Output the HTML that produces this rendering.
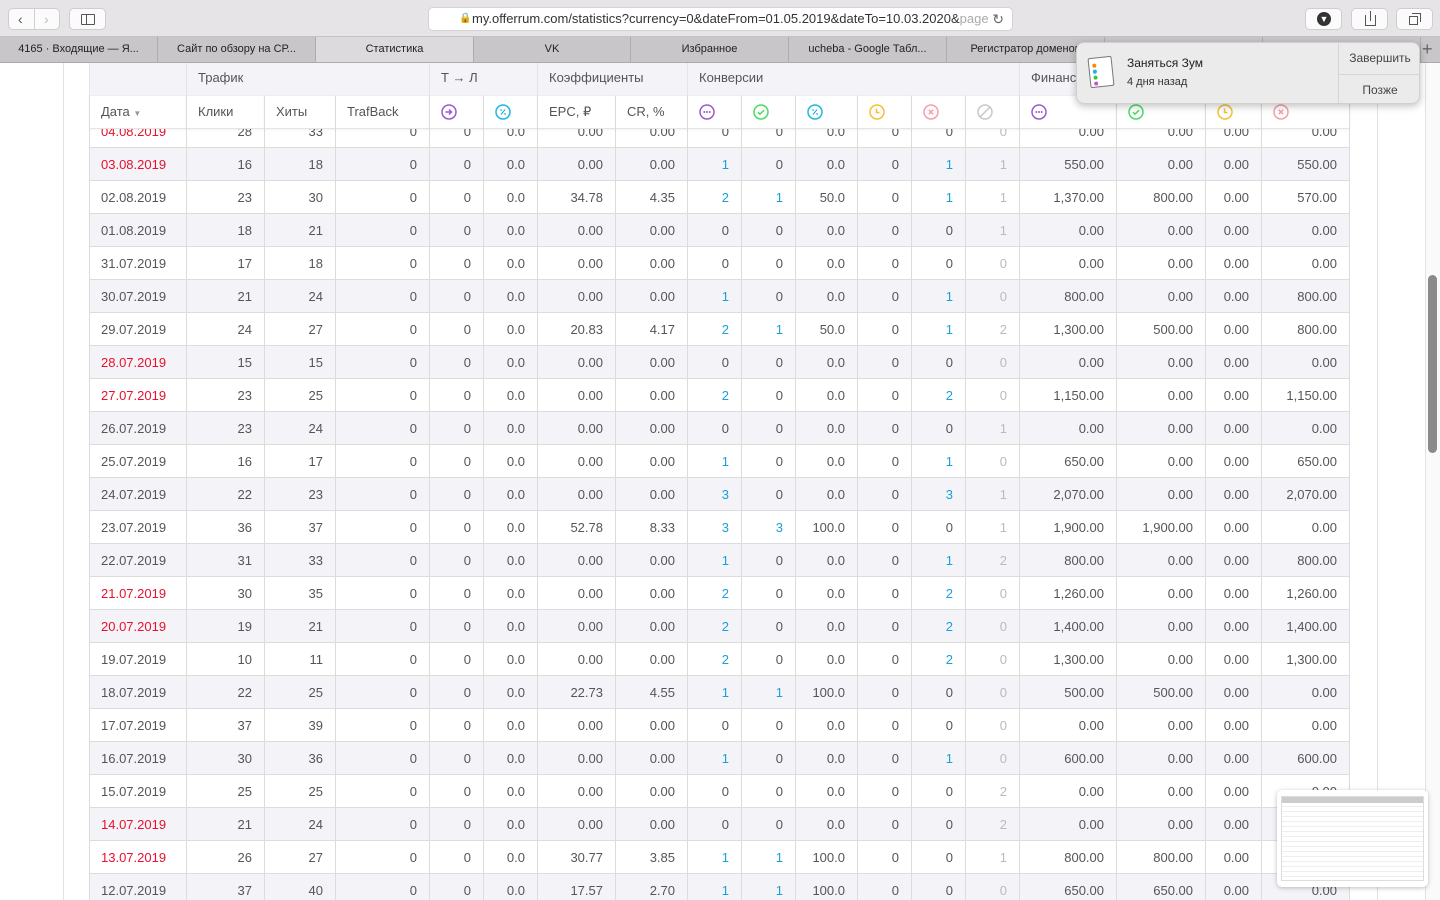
<!DOCTYPE html>
<html><head><meta charset="utf-8"><style>
*{box-sizing:border-box;margin:0;padding:0}
body{width:1440px;height:900px;overflow:hidden;background:#fff;font-family:"Liberation Sans","Noto Sans CJK SC",sans-serif;position:relative;color:#555}
.tb{position:absolute;left:0;top:0;width:1440px;height:37px;background:#e6e4e6;border-bottom:1px solid #c4c2c4}
.btn{position:absolute;top:8px;height:22px;background:#fbfbfb;border:1px solid #cfcdcf;border-radius:5px}
.url{position:absolute;left:428px;top:7px;width:585px;height:24px;background:#fff;border:1px solid #d4d2d4;border-radius:5px;font-size:13px;color:#333;line-height:22px;padding-left:30px;white-space:nowrap;overflow:hidden}
.tabs{position:absolute;left:0;top:37px;width:1440px;height:26px;background:#c8c6c8;border-bottom:1px solid #aaa}
.tab{position:absolute;top:0;height:25px;border-right:1px solid #aeacae;font-size:11px;color:#222;text-align:center;line-height:25px;white-space:nowrap;overflow:hidden}
.tab.a{background:#dcdadc}
.page{position:absolute;left:0;top:63px;width:1440px;height:837px;overflow:hidden}
.vl{position:absolute;top:0;bottom:0;width:1px;background:#e2e2e2}
table{border-collapse:collapse;position:absolute;left:89px;table-layout:fixed}
td{border:1px solid #dcdcdc;height:33px;font-size:13px;text-align:right;padding-right:12px;white-space:nowrap;color:#555}
td:first-child{text-align:left;padding-left:11px}
tr:nth-child(even) td{background:#f4f4f8}
.r{color:#e8102e!important}.b{color:#1a9fd8!important}.g{color:#bbb!important}
.hd{position:absolute;left:89px;top:0;width:1261px;height:65px}
.grp{position:absolute;top:0;height:32px;background:#f4f4f8;font-size:13px;line-height:30px;padding-left:11px;color:#555;border-left:1px solid #e4e4e8}
.ch{position:absolute;top:32px;height:34px;background:#fff;font-size:13px;line-height:32px;padding-left:11px;border-left:1px solid #dcdcdc;border-top:1px solid #eee;border-bottom:1px solid #e4e4e4;box-shadow:0 1px 2px rgba(0,0,0,.05)}
.ch svg{margin-top:8px}
.notif{position:absolute;left:1076px;top:42px;width:344px;height:62px;background:#ecebec;border-radius:8px;box-shadow:0 2px 8px rgba(0,0,0,.25);border:1px solid #d0d0d0}
</style></head><body>
<div class="tb">
<div class="btn" style="left:8px;width:52px"><span style="position:absolute;left:9px;top:2px;font-size:14px;color:#555">&#8249;</span><span style="position:absolute;left:25px;top:0;bottom:0;width:1px;background:#d0d0d0"></span><span style="position:absolute;left:35px;top:2px;font-size:14px;color:#bbb">&#8250;</span></div>
<div class="btn" style="left:69px;width:37px"><span style="position:absolute;left:11px;top:5px;width:14px;height:11px;border:1px solid #555;border-radius:1px"></span><span style="position:absolute;left:16px;top:5px;width:1px;height:11px;background:#555"></span></div>
<div class="url"><span style="position:absolute;left:30px;top:0;font-size:10px;color:#777">&#128274;</span><span style="margin-left:13px">my.offerrum.com/statistics?currency=0&amp;dateFrom=01.05.2019&amp;dateTo=10.03.2020&amp;<span style="color:#aaa">page</span></span><span style="position:absolute;right:8px;top:0;color:#666;font-size:14px;background:#fff;padding-left:4px">&#8635;</span></div>
<div class="btn" style="left:1305px;width:37px"><span style="position:absolute;left:11px;top:3px;width:14px;height:14px;border-radius:50%;background:#333;color:#fff;font-size:9px;text-align:center;line-height:14px">&#9660;</span></div>
<div class="btn" style="left:1351px;width:37px"><span style="position:absolute;left:13px;top:6px;width:11px;height:11px;border:1px solid #555;border-top:none"></span><span style="position:absolute;left:18px;top:2px;width:1px;height:10px;background:#555"></span></div>
<div class="btn" style="left:1396px;width:37px"><span style="position:absolute;left:12px;top:7px;width:9px;height:9px;border:1px solid #555"></span><span style="position:absolute;left:15px;top:4px;width:9px;height:9px;border-top:1px solid #555;border-right:1px solid #555"></span></div>
</div>
<div class="tabs">
<div class="tab" style="left:0;width:158px">4165 · Входящие — Я...</div>
<div class="tab" style="left:158px;width:158px">Сайт по обзору на СР...</div>
<div class="tab a" style="left:316px;width:158px">Статистика</div>
<div class="tab" style="left:474px;width:157px">VK</div>
<div class="tab" style="left:631px;width:158px">Избранное</div>
<div class="tab" style="left:789px;width:158px">ucheba - Google Табл...</div>
<div class="tab" style="left:947px;width:158px">Регистратор доменов</div>
<div class="tab" style="left:1105px;width:158px"></div>
<div class="tab" style="left:1263px;width:158px"></div>
<div style="position:absolute;left:1422px;top:0;font-size:18px;color:#666;line-height:25px">+</div>
</div>
<div class="page">
<div class="vl" style="left:63px"></div><div class="vl" style="left:1377px"></div><div class="vl" style="left:1425px"></div>
<div style="position:absolute;left:1426px;top:0;width:14px;height:837px;background:#fafafa"></div>
<div style="position:absolute;left:1428px;top:212px;width:9px;height:178px;border-radius:5px;background:#8a8a8a"></div>
<table style="top:51px">
<colgroup><col style="width:97px"><col style="width:78px"><col style="width:71px"><col style="width:94px"><col style="width:54px"><col style="width:54px"><col style="width:78px"><col style="width:72px"><col style="width:54px"><col style="width:54px"><col style="width:62px"><col style="width:54px"><col style="width:54px"><col style="width:54px"><col style="width:97px"><col style="width:89px"><col style="width:56px"><col style="width:88px"></colgroup>
<tr><td class="r">04.08.2019</td><td>28</td><td>33</td><td>0</td><td>0</td><td>0.0</td><td>0.00</td><td>0.00</td><td>0</td><td>0</td><td>0.0</td><td>0</td><td>0</td><td class="g">0</td><td>0.00</td><td>0.00</td><td>0.00</td><td>0.00</td></tr>
<tr><td class="r">03.08.2019</td><td>16</td><td>18</td><td>0</td><td>0</td><td>0.0</td><td>0.00</td><td>0.00</td><td class="b">1</td><td>0</td><td>0.0</td><td>0</td><td class="b">1</td><td class="g">1</td><td>550.00</td><td>0.00</td><td>0.00</td><td>550.00</td></tr>
<tr><td>02.08.2019</td><td>23</td><td>30</td><td>0</td><td>0</td><td>0.0</td><td>34.78</td><td>4.35</td><td class="b">2</td><td class="b">1</td><td>50.0</td><td>0</td><td class="b">1</td><td class="g">1</td><td>1,370.00</td><td>800.00</td><td>0.00</td><td>570.00</td></tr>
<tr><td>01.08.2019</td><td>18</td><td>21</td><td>0</td><td>0</td><td>0.0</td><td>0.00</td><td>0.00</td><td>0</td><td>0</td><td>0.0</td><td>0</td><td>0</td><td class="g">1</td><td>0.00</td><td>0.00</td><td>0.00</td><td>0.00</td></tr>
<tr><td>31.07.2019</td><td>17</td><td>18</td><td>0</td><td>0</td><td>0.0</td><td>0.00</td><td>0.00</td><td>0</td><td>0</td><td>0.0</td><td>0</td><td>0</td><td class="g">0</td><td>0.00</td><td>0.00</td><td>0.00</td><td>0.00</td></tr>
<tr><td>30.07.2019</td><td>21</td><td>24</td><td>0</td><td>0</td><td>0.0</td><td>0.00</td><td>0.00</td><td class="b">1</td><td>0</td><td>0.0</td><td>0</td><td class="b">1</td><td class="g">0</td><td>800.00</td><td>0.00</td><td>0.00</td><td>800.00</td></tr>
<tr><td>29.07.2019</td><td>24</td><td>27</td><td>0</td><td>0</td><td>0.0</td><td>20.83</td><td>4.17</td><td class="b">2</td><td class="b">1</td><td>50.0</td><td>0</td><td class="b">1</td><td class="g">2</td><td>1,300.00</td><td>500.00</td><td>0.00</td><td>800.00</td></tr>
<tr><td class="r">28.07.2019</td><td>15</td><td>15</td><td>0</td><td>0</td><td>0.0</td><td>0.00</td><td>0.00</td><td>0</td><td>0</td><td>0.0</td><td>0</td><td>0</td><td class="g">0</td><td>0.00</td><td>0.00</td><td>0.00</td><td>0.00</td></tr>
<tr><td class="r">27.07.2019</td><td>23</td><td>25</td><td>0</td><td>0</td><td>0.0</td><td>0.00</td><td>0.00</td><td class="b">2</td><td>0</td><td>0.0</td><td>0</td><td class="b">2</td><td class="g">0</td><td>1,150.00</td><td>0.00</td><td>0.00</td><td>1,150.00</td></tr>
<tr><td>26.07.2019</td><td>23</td><td>24</td><td>0</td><td>0</td><td>0.0</td><td>0.00</td><td>0.00</td><td>0</td><td>0</td><td>0.0</td><td>0</td><td>0</td><td class="g">1</td><td>0.00</td><td>0.00</td><td>0.00</td><td>0.00</td></tr>
<tr><td>25.07.2019</td><td>16</td><td>17</td><td>0</td><td>0</td><td>0.0</td><td>0.00</td><td>0.00</td><td class="b">1</td><td>0</td><td>0.0</td><td>0</td><td class="b">1</td><td class="g">0</td><td>650.00</td><td>0.00</td><td>0.00</td><td>650.00</td></tr>
<tr><td>24.07.2019</td><td>22</td><td>23</td><td>0</td><td>0</td><td>0.0</td><td>0.00</td><td>0.00</td><td class="b">3</td><td>0</td><td>0.0</td><td>0</td><td class="b">3</td><td class="g">1</td><td>2,070.00</td><td>0.00</td><td>0.00</td><td>2,070.00</td></tr>
<tr><td>23.07.2019</td><td>36</td><td>37</td><td>0</td><td>0</td><td>0.0</td><td>52.78</td><td>8.33</td><td class="b">3</td><td class="b">3</td><td>100.0</td><td>0</td><td>0</td><td class="g">1</td><td>1,900.00</td><td>1,900.00</td><td>0.00</td><td>0.00</td></tr>
<tr><td>22.07.2019</td><td>31</td><td>33</td><td>0</td><td>0</td><td>0.0</td><td>0.00</td><td>0.00</td><td class="b">1</td><td>0</td><td>0.0</td><td>0</td><td class="b">1</td><td class="g">2</td><td>800.00</td><td>0.00</td><td>0.00</td><td>800.00</td></tr>
<tr><td class="r">21.07.2019</td><td>30</td><td>35</td><td>0</td><td>0</td><td>0.0</td><td>0.00</td><td>0.00</td><td class="b">2</td><td>0</td><td>0.0</td><td>0</td><td class="b">2</td><td class="g">0</td><td>1,260.00</td><td>0.00</td><td>0.00</td><td>1,260.00</td></tr>
<tr><td class="r">20.07.2019</td><td>19</td><td>21</td><td>0</td><td>0</td><td>0.0</td><td>0.00</td><td>0.00</td><td class="b">2</td><td>0</td><td>0.0</td><td>0</td><td class="b">2</td><td class="g">0</td><td>1,400.00</td><td>0.00</td><td>0.00</td><td>1,400.00</td></tr>
<tr><td>19.07.2019</td><td>10</td><td>11</td><td>0</td><td>0</td><td>0.0</td><td>0.00</td><td>0.00</td><td class="b">2</td><td>0</td><td>0.0</td><td>0</td><td class="b">2</td><td class="g">0</td><td>1,300.00</td><td>0.00</td><td>0.00</td><td>1,300.00</td></tr>
<tr><td>18.07.2019</td><td>22</td><td>25</td><td>0</td><td>0</td><td>0.0</td><td>22.73</td><td>4.55</td><td class="b">1</td><td class="b">1</td><td>100.0</td><td>0</td><td>0</td><td class="g">0</td><td>500.00</td><td>500.00</td><td>0.00</td><td>0.00</td></tr>
<tr><td>17.07.2019</td><td>37</td><td>39</td><td>0</td><td>0</td><td>0.0</td><td>0.00</td><td>0.00</td><td>0</td><td>0</td><td>0.0</td><td>0</td><td>0</td><td class="g">0</td><td>0.00</td><td>0.00</td><td>0.00</td><td>0.00</td></tr>
<tr><td>16.07.2019</td><td>30</td><td>36</td><td>0</td><td>0</td><td>0.0</td><td>0.00</td><td>0.00</td><td class="b">1</td><td>0</td><td>0.0</td><td>0</td><td class="b">1</td><td class="g">0</td><td>600.00</td><td>0.00</td><td>0.00</td><td>600.00</td></tr>
<tr><td>15.07.2019</td><td>25</td><td>25</td><td>0</td><td>0</td><td>0.0</td><td>0.00</td><td>0.00</td><td>0</td><td>0</td><td>0.0</td><td>0</td><td>0</td><td class="g">2</td><td>0.00</td><td>0.00</td><td>0.00</td><td>0.00</td></tr>
<tr><td class="r">14.07.2019</td><td>21</td><td>24</td><td>0</td><td>0</td><td>0.0</td><td>0.00</td><td>0.00</td><td>0</td><td>0</td><td>0.0</td><td>0</td><td>0</td><td class="g">2</td><td>0.00</td><td>0.00</td><td>0.00</td><td>0.00</td></tr>
<tr><td class="r">13.07.2019</td><td>26</td><td>27</td><td>0</td><td>0</td><td>0.0</td><td>30.77</td><td>3.85</td><td class="b">1</td><td class="b">1</td><td>100.0</td><td>0</td><td>0</td><td class="g">1</td><td>800.00</td><td>800.00</td><td>0.00</td><td>0.00</td></tr>
<tr><td>12.07.2019</td><td>37</td><td>40</td><td>0</td><td>0</td><td>0.0</td><td>17.57</td><td>2.70</td><td class="b">1</td><td class="b">1</td><td>100.0</td><td>0</td><td>0</td><td class="g">0</td><td>650.00</td><td>650.00</td><td>0.00</td><td>0.00</td></tr>
</table>
<div class="hd">
<div class="grp" style="left:0;width:97px"></div>
<div class="grp" style="left:97px;width:243px">Трафик</div>
<div class="grp" style="left:340px;width:108px">Т → Л</div>
<div class="grp" style="left:448px;width:150px">Коэффициенты</div>
<div class="grp" style="left:598px;width:332px">Конверсии</div>
<div class="grp" style="left:930px;width:331px">Финансы</div>
<div class="ch" style="left:0;width:97px">Дата <span style="font-size:8px;color:#999">&#9660;</span></div>
<div class="ch" style="left:97px;width:78px">Клики</div>
<div class="ch" style="left:175px;width:71px">Хиты</div>
<div class="ch" style="left:246px;width:94px">TrafBack</div>
<div class="ch" style="left:340px;width:54px"><svg width="16" height="16" viewBox="0 0 16 16"><circle cx="8" cy="8" r="7" fill="none" stroke="#9b59d0" stroke-width="1.5"/><path d="M4.5 8h6M8 5.5l2.5 2.5-2.5 2.5" fill="none" stroke="#9b59d0" stroke-width="1.5"/></svg></div>
<div class="ch" style="left:394px;width:54px"><svg width="16" height="16" viewBox="0 0 16 16"><circle cx="8" cy="8" r="7" fill="none" stroke="#1fb6e8" stroke-width="1.5"/><path d="M10 5.5l-4 5" stroke="#1fb6e8" stroke-width="1.2"/><circle cx="6" cy="6" r=".9" fill="#1fb6e8"/><circle cx="10" cy="10" r=".9" fill="#1fb6e8"/></svg></div>
<div class="ch" style="left:448px;width:78px">EPC, ₽</div>
<div class="ch" style="left:526px;width:72px">CR, %</div>
<div class="ch" style="left:598px;width:54px"><svg width="16" height="16" viewBox="0 0 16 16"><circle cx="8" cy="8" r="7" fill="none" stroke="#9b59d0" stroke-width="1.5"/><circle cx="5.3" cy="8" r="1" fill="#9b59d0"/><circle cx="8" cy="8" r="1" fill="#9b59d0"/><circle cx="10.7" cy="8" r="1" fill="#9b59d0"/></svg></div>
<div class="ch" style="left:652px;width:54px"><svg width="16" height="16" viewBox="0 0 16 16"><circle cx="8" cy="8" r="7" fill="none" stroke="#4cd964" stroke-width="1.5"/><path d="M5 8.2l2 2 4-4" fill="none" stroke="#4cd964" stroke-width="1.5"/></svg></div>
<div class="ch" style="left:706px;width:62px"><svg width="16" height="16" viewBox="0 0 16 16"><circle cx="8" cy="8" r="7" fill="none" stroke="#1fb6e8" stroke-width="1.5"/><path d="M10 5.5l-4 5" stroke="#1fb6e8" stroke-width="1.2"/><circle cx="6" cy="6" r=".9" fill="#1fb6e8"/><circle cx="10" cy="10" r=".9" fill="#1fb6e8"/></svg></div>
<div class="ch" style="left:768px;width:54px"><svg width="16" height="16" viewBox="0 0 16 16"><circle cx="8" cy="8" r="7" fill="none" stroke="#f5c030" stroke-width="1.5"/><path d="M7.5 4.5v4h3" fill="none" stroke="#f5c030" stroke-width="1.5"/></svg></div>
<div class="ch" style="left:822px;width:54px"><svg width="16" height="16" viewBox="0 0 16 16"><circle cx="8" cy="8" r="7" fill="none" stroke="#f4a0aa" stroke-width="1.5"/><path d="M5.8 5.8l4.4 4.4M10.2 5.8l-4.4 4.4" stroke="#f4a0aa" stroke-width="1.5"/></svg></div>
<div class="ch" style="left:876px;width:54px"><svg width="16" height="16" viewBox="0 0 16 16"><circle cx="8" cy="8" r="7" fill="none" stroke="#c8c8c8" stroke-width="1.5"/><path d="M3.5 12.5l9-9" stroke="#c8c8c8" stroke-width="1.5"/></svg></div>
<div class="ch" style="left:930px;width:97px"><svg width="16" height="16" viewBox="0 0 16 16"><circle cx="8" cy="8" r="7" fill="none" stroke="#9b59d0" stroke-width="1.5"/><circle cx="5.3" cy="8" r="1" fill="#9b59d0"/><circle cx="8" cy="8" r="1" fill="#9b59d0"/><circle cx="10.7" cy="8" r="1" fill="#9b59d0"/></svg></div>
<div class="ch" style="left:1027px;width:89px"><svg width="16" height="16" viewBox="0 0 16 16"><circle cx="8" cy="8" r="7" fill="none" stroke="#4cd964" stroke-width="1.5"/><path d="M5 8.2l2 2 4-4" fill="none" stroke="#4cd964" stroke-width="1.5"/></svg></div>
<div class="ch" style="left:1116px;width:56px"><svg width="16" height="16" viewBox="0 0 16 16"><circle cx="8" cy="8" r="7" fill="none" stroke="#f5c030" stroke-width="1.5"/><path d="M7.5 4.5v4h3" fill="none" stroke="#f5c030" stroke-width="1.5"/></svg></div>
<div class="ch" style="left:1172px;width:89px;border-right:1px solid #dcdcdc"><svg width="16" height="16" viewBox="0 0 16 16"><circle cx="8" cy="8" r="7" fill="none" stroke="#f4a0aa" stroke-width="1.5"/><path d="M5.8 5.8l4.4 4.4M10.2 5.8l-4.4 4.4" stroke="#f4a0aa" stroke-width="1.5"/></svg></div>
</div>
<div style="position:absolute;left:1277px;top:727px;width:151px;height:97px;background:#fff;border-radius:5px;box-shadow:0 1px 5px rgba(0,0,0,.25);padding:6px 4px">
<div style="width:100%;height:100%;border:1px solid #ddd;background:repeating-linear-gradient(#fff 0 4px,#eee 4px 5px)"><div style="height:6px;background:#ccc"></div></div></div>
</div>
<div class="notif">
<div style="position:absolute;left:12px;top:14px;width:24px;height:30px;background:#fff;border:1px solid #777;border-radius:2px;transform:rotate(-6deg)">
<div style="position:absolute;left:3px;top:5px;width:4px;height:4px;border-radius:50%;background:#f80"></div>
<div style="position:absolute;left:3px;top:11px;width:4px;height:4px;border-radius:50%;background:#1ab0f0"></div>
<div style="position:absolute;left:3px;top:17px;width:4px;height:4px;border-radius:50%;background:#3c3"></div>
<div style="position:absolute;left:3px;top:23px;width:4px;height:4px;border-radius:50%;background:#c5c"></div></div>
<div style="position:absolute;left:50px;top:13px;font-size:12px;color:#222">Заняться Зум</div>
<div style="position:absolute;left:50px;top:33px;font-size:11px;color:#333">4 дня назад</div>
<div style="position:absolute;left:261px;top:0;bottom:0;width:1px;background:#d5d5d5"></div>
<div style="position:absolute;left:261px;top:31px;width:82px;height:1px;background:#d5d5d5"></div>
<div style="position:absolute;left:262px;top:8px;width:82px;text-align:center;font-size:12px;color:#444">Завершить</div>
<div style="position:absolute;left:262px;top:40px;width:82px;text-align:center;font-size:12px;color:#444">Позже</div>
</div>
</body></html>
